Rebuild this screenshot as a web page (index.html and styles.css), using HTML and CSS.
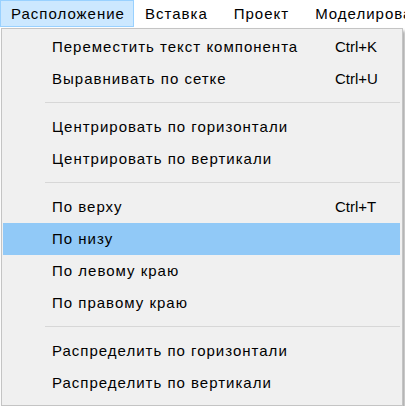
FILE: index.html
```html
<!DOCTYPE html>
<html lang="ru">
<head>
    <meta charset="UTF-8">
    <title>Расположение</title>
    <link rel="stylesheet" href="styles.css">
</head>
<body>
    <div class="menubar">
        <span class="menubar-item open">Расположение</span>
        <span class="menubar-item">Вставка</span>
        <span class="menubar-item">Проект</span>
        <span class="menubar-item">Моделирование</span>
    </div>

    <div class="dropdown">
        <div class="item"><span>Переместить текст компонента</span><span class="key">Ctrl+K</span></div>
        <div class="item"><span>Выравнивать по сетке</span><span class="key">Ctrl+U</span></div>
        <div class="sep"></div>
        <div class="item"><span>Центрировать по горизонтали</span></div>
        <div class="item"><span>Центрировать по вертикали</span></div>
        <div class="sep"></div>
        <div class="item"><span>По верху</span><span class="key">Ctrl+T</span></div>
        <div class="item hover"><span>По низу</span></div>
        <div class="item"><span>По левому краю</span></div>
        <div class="item"><span>По правому краю</span></div>
        <div class="sep"></div>
        <div class="item"><span>Распределить по горизонтали</span></div>
        <div class="item"><span>Распределить по вертикали</span></div>
    </div>
</body>
</html>
```

FILE: styles.css
```css
body {
    margin: 0;
    font-family: "Liberation Sans", Arial, sans-serif;
    font-size: 15px;
    letter-spacing: 1px;
    color: #000;
    background-color: #fff;
    overflow: hidden;
}

.menubar {
    display: flex;
    height: 28px;
    background-color: #fff;
    white-space: nowrap;
    overflow: hidden;
}

.menubar-item {
    box-sizing: border-box;
    height: 27px;
    line-height: 25px;
    padding: 0 14px 0 10px;
    border: 1px solid transparent;
}

.menubar-item.open {
    padding-right: 8px;
    background-color: #cce8ff;
    border-color: #99d1ff;
}

.dropdown {
    width: 400px;
    margin-left: 1px;
    padding: 2px 0 6px;
    background-color: #f0f0f0;
    border: 1px solid #c4c4c4;
    box-shadow: 2px 3px 3px rgba(0, 0, 0, 0.35);
}

.item {
    display: grid;
    grid-template-columns: 283px 1fr;
    height: 32px;
    line-height: 32px;
    margin: 0 2px 0 1px;
    padding-left: 49px;
}

.item .key {
    letter-spacing: 0;
}

.item.hover {
    background-color: #91c9f7;
}

.sep {
    height: 1px;
    margin: 7px 2px 8px 43px;
    background-color: #d7d7d7;
}
```
